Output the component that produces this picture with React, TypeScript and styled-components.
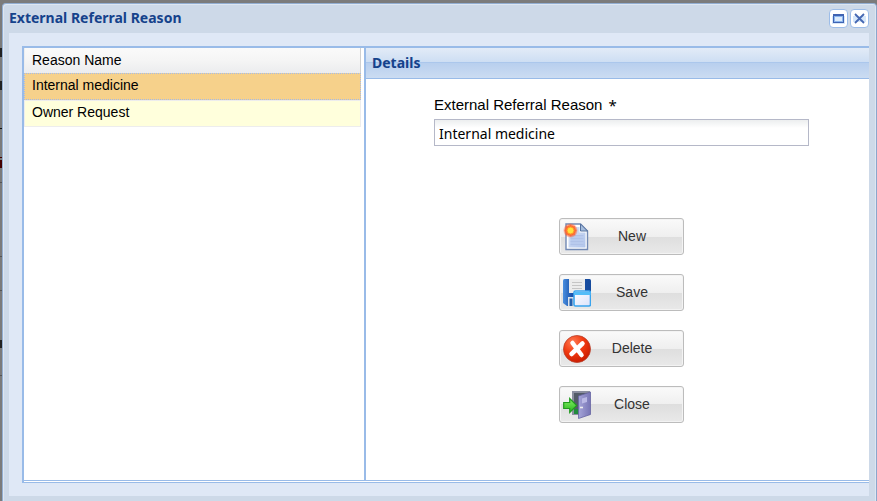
import React, { useState } from "react";
import styled, { createGlobalStyle } from "styled-components";

const arial = `"Liberation Sans", Arial, sans-serif`;
const humanist = `"Noto Sans", Tahoma, sans-serif`;
const line = "#99bbe8";

const GlobalStyle = createGlobalStyle`
  * { box-sizing: border-box; }
  body { margin: 0; background: #7b7b7b; font-family: ${arial}; font-size: 14px; color: #000; }
  button, input { font: inherit; color: inherit; }
`;

const Backdrop = styled.div`
  min-height: 100vh;
  display: flex;
  padding: 3px 0 0 2px;
  background:
    linear-gradient(#222, #222) 0 48px / 2px 9px no-repeat,
    linear-gradient(#222, #222) 0 81px / 2px 9px no-repeat,
    linear-gradient(#111, #111) 0 128px / 2px 1px no-repeat,
    linear-gradient(#400, #400) 0 157px / 2px 1px no-repeat,
    linear-gradient(#400, #400) 0 160px / 2px 8px no-repeat,
    linear-gradient(#555, #555) 0 182px / 2px 1px no-repeat,
    linear-gradient(#555, #555) 0 256px / 2px 1px no-repeat,
    linear-gradient(#555, #555) 0 290px / 2px 1px no-repeat,
    linear-gradient(#222, #222) 0 340px / 2px 8px no-repeat,
    linear-gradient(#555, #555) 0 375px / 2px 1px no-repeat,
    #7b7b7b;
`;

const Window = styled.section`
  flex: 1;
  min-width: 0;
  display: flex;
  flex-direction: column;
  padding: 0 7px 5px 6px;
  background: #cdd9e8;
  border: 1px solid #92aed2;
  border-right-color: #8ba6cb;
  border-bottom: 0;
  border-radius: 4px 4px 0 0;
  box-shadow: inset 1px 1px 0 #dde6f1, inset -1px 0 0 #dde6f1;
`;

const TitleBar = styled.header`
  height: 29px;
  flex: none;
  display: flex;
  align-items: center;
  justify-content: space-between;
`;

const Heading = styled.h1`
  margin: 0;
  padding-bottom: 2px;
  font: bold 14px/18px ${humanist};
  color: #15428b;
`;

const Tools = styled.div`
  display: flex;
  gap: 2px;
`;

const ToolButton = styled.button`
  width: 19px;
  height: 19px;
  padding: 0;
  border: 1px solid #9dbde8;
  border-radius: 4px;
  background: #fff;
  display: grid;
  place-items: center;
`;

const Body = styled.div`
  flex: 1;
  display: flex;
  padding: 13px 0 13px 13px;
  background: #dfe8f6;
`;

const Panels = styled.div`
  flex: 1;
  min-width: 0;
  display: flex;
  background: #fff;
  border-style: solid;
  border-color: ${line};
  border-width: 2px 0 1px 2px;
  padding-bottom: 1px;
`;

const ListPanel = styled.div`
  flex: 0 0 340px;
  padding-right: 3px;
  border-bottom: 1px solid ${line};
`;

const Grid = styled.table`
  width: 100%;
  border-collapse: separate;
  border-spacing: 0;
`;

const HeaderCell = styled.th`
  height: 25px;
  padding: 0 7px 1px;
  text-align: left;
  font-weight: normal;
  line-height: 16px;
  background: linear-gradient(#fafafa, #f5f5f5 50%, #ebecee);
  border-left: 1px solid #eee;
  border-right: 1px solid #d0d0d0;
`;

const Cell = styled.td<{ $selected: boolean }>`
  height: 27px;
  padding: 0 7px 4px;
  line-height: 16px;
  cursor: default;
  background: ${(p) => (p.$selected ? "#f6d18b" : "#ffffdc")};
  border: 1px ${(p) => (p.$selected ? "dotted #a3bae9" : "solid #ededed")};
`;

const DetailPanel = styled.div`
  flex: 1;
  min-width: 0;
  border-left: 2px solid ${line};
  border-bottom: 1px solid ${line};
`;

const PanelHeader = styled.h2`
  margin: 0;
  height: 31px;
  padding: 0 6px;
  font: bold 14px/30px ${humanist};
  color: #15428b;
  border-bottom: 1px solid ${line};
  background: linear-gradient(#e2ebf7, #cddef3 14px, #abc7ec 14px, #abc7ec 15px, #b8cfee 15px, #cbdcf2);
`;

const Form = styled.form`
  padding: 17px 60px 0 68px;
`;

const FieldLabel = styled.label`
  display: flex;
  gap: 6px;
  font-size: 15px;
  line-height: 18px;
  margin-bottom: 5px;
`;

const Required = styled.span`
  font-family: ${humanist};
`;

const TextField = styled.input`
  display: block;
  width: 100%;
  height: 27px;
  padding: 1px 4px 0;
  border: 1px solid #b5b8c8;
  border-radius: 0;
  outline: 0;
  font: 14px ${humanist};
  background: linear-gradient(#eceeef, #fff 8px);
`;

const Actions = styled.div`
  display: flex;
  flex-direction: column;
  align-items: center;
  gap: 19px;
  margin-top: 72px;
`;

const ActionButton = styled.button`
  width: 125px;
  height: 37px;
  padding: 0 10px 0 3px;
  display: flex;
  align-items: center;
  border: 1px solid #bcbcbc;
  border-radius: 3px;
  color: #333;
  background: linear-gradient(#fafafa, #efefef 50%, #dedede 50%, #e9e9e9);
  box-shadow: inset 0 0 0 1px #f3f3f3;
  span { flex: 1; text-align: center; padding-bottom: 2px; }
`;

const NewIcon = () => (
  <svg width="28" height="28" viewBox="0 0 28 28" aria-hidden="true">
    <defs>
      <linearGradient id="page" x2="1" y2="1"><stop stopColor="#dbe5f8" /><stop offset="1" stopColor="#aec3ea" /></linearGradient>
      <radialGradient id="glow"><stop stopColor="#fff36a" /><stop offset=".3" stopColor="#ffd94a" /><stop offset=".6" stopColor="#ff6a2a" /><stop offset="1" stopColor="#ff5020" stopOpacity="0" /></radialGradient>
    </defs>
    <path d="M3 1h14.500l7 7v18.500H3z" fill="#fff" stroke="#7189b4" strokeWidth="1.400" />
    <path d="M5.500 4h11v5.500h6v15h-17z" fill="url(#page)" />
    <path d="M17.500 1v7h7z" fill="#a5bddd" stroke="#56729f" />
    <path d="M7.500 12.500h13v10h-13z" fill="#b9cbee" />
    <path d="M7.500 12.500h13M7.500 15.500h13M7.500 18.500h13M7.500 21.500h13" stroke="#b0c2e8" />
    <circle cx="7.500" cy="7.500" r="7.500" fill="url(#glow)" />
    <path d="M7.500 1.500v12M1.500 7.500h12M3.200 3.200l8.600 8.600M11.800 3.200l-8.600 8.600" stroke="#ff6038" strokeWidth="1.300" opacity=".7" />
    <circle cx="7.500" cy="7.500" r="3.500" fill="#ffe23e" stroke="#ff9228" />
  </svg>
);

const SaveIcon = () => (
  <svg width="28" height="28" viewBox="0 0 28 28" aria-hidden="true">
    <defs>
      <linearGradient id="disk" x2="1"><stop stopColor="#4a8fe0" /><stop offset=".3" stopColor="#1c55ad" /><stop offset="1" stopColor="#164a9c" /></linearGradient>
      <linearGradient id="pane" x2="1" y2="1"><stop stopColor="#fff" /><stop offset="1" stopColor="#dbe2fb" /></linearGradient>
    </defs>
    <path d="M1.500 0h25q1.500 0 1.500 1.500v24q0 1.500-1.500 1.500H4l-4-3V1.500Q0 0 1.500 0z" fill="url(#disk)" />
    <path d="M6 0h16v14H6z" fill="#ececec" />
    <path d="M9 3.500h10M9 6.500h10M9 9.500h10" stroke="#c5c5c5" />
    <path d="M5 18h8v9H5z" fill="#dce3eb" />
    <path d="M6.500 19.500h3V27h-3z" fill="#225fae" />
    <rect x="11" y="12" width="16.500" height="15" rx="1.500" fill="url(#pane)" stroke="#39a4ee" strokeWidth="1.600" />
    <path d="M11 13h16.500v3H11z" fill="#54bdf8" />
  </svg>
);

const DeleteIcon = () => (
  <svg width="28" height="28" viewBox="0 0 28 28" aria-hidden="true">
    <defs><radialGradient id="red" cx=".35" cy=".25" r=".8"><stop stopColor="#ff7c55" /><stop offset=".5" stopColor="#f13a10" /><stop offset="1" stopColor="#c81b00" /></radialGradient></defs>
    <circle cx="14" cy="14" r="13.500" fill="url(#red)" stroke="#b8402c" strokeWidth=".8" />
    <path d="M9.500 8l9 12M19.500 8.500L8.500 19" stroke="#fff" strokeWidth="4.500" strokeLinecap="round" />
  </svg>
);

const CloseIcon = () => (
  <svg width="28" height="28" viewBox="0 0 28 28" aria-hidden="true">
    <defs>
      <linearGradient id="door" x2="1"><stop stopColor="#a5a4d8" /><stop offset="1" stopColor="#7775b5" /></linearGradient>
      <linearGradient id="arrow" x2="0" y2="1"><stop stopColor="#88f067" /><stop offset="1" stopColor="#26b71b" /></linearGradient>
    </defs>
    <path d="M9 0h18v24H9z" fill="#8a8e9f" />
    <path d="M11 2h14v21H11z" fill="#535b68" />
    <path d="M11 18h5v5h-5z" fill="#218b3c" />
    <path d="M15.500 5L27.500 1v22.500l-12 4z" fill="url(#door)" stroke="#6765a2" strokeWidth=".8" />
    <path d="M19 7.500l5-1.500v5l-5 1.500z" fill="#bab9e5" />
    <path d="M17 16.500h3" stroke="#eee" strokeWidth="1.600" />
    <path d="M.7 11.500h6V7.500l7 7-7 7v-4h-6z" fill="url(#arrow)" stroke="#229b20" strokeWidth="1.200" />
  </svg>
);

const MaximizeIcon = () => (
  <svg width="13" height="13" viewBox="0 0 13 13" aria-hidden="true">
    <path d="M0 4h13v8H0z" fill="#d6e7fa" />
    <path d="M1 2h11v9H1z" fill="#3f63b2" />
    <path d="M2 4h9v6H2z" fill="#8ab5ee" />
    <path d="M3 5h7v4H3z" fill="#dcebfb" />
  </svg>
);

const CrossIcon = () => (
  <svg width="13" height="13" viewBox="0 0 13 13" aria-hidden="true">
    <path d="M0 4h13v6H0z" fill="#d6e7fa" />
    <path d="M2 2l9 9M11 2l-9 9" stroke="#4668b2" strokeWidth="1.800" />
  </svg>
);

const reasons = ["Internal medicine", "Owner Request"];
const actions = [
  { label: "New", Icon: NewIcon },
  { label: "Save", Icon: SaveIcon },
  { label: "Delete", Icon: DeleteIcon },
  { label: "Close", Icon: CloseIcon },
];

export default function App() {
  const [selected, setSelected] = useState(0);
  const [value, setValue] = useState(reasons[0]);

  const choose = (index: number) => {
    setSelected(index);
    setValue(reasons[index]);
  };

  return (
    <Backdrop>
      <GlobalStyle />
      <Window>
        <TitleBar>
          <Heading>External Referral Reason</Heading>
          <Tools>
            <ToolButton type="button" aria-label="Maximize"><MaximizeIcon /></ToolButton>
            <ToolButton type="button" aria-label="Close window"><CrossIcon /></ToolButton>
          </Tools>
        </TitleBar>
        <Body>
          <Panels>
            <ListPanel>
              <Grid>
                <thead><tr><HeaderCell scope="col">Reason Name</HeaderCell></tr></thead>
                <tbody>
                  {reasons.map((reason, i) => (
                    <tr key={reason} onClick={() => choose(i)}>
                      <Cell $selected={i === selected}>{reason}</Cell>
                    </tr>
                  ))}
                </tbody>
              </Grid>
            </ListPanel>
            <DetailPanel>
              <PanelHeader>Details</PanelHeader>
              <Form onSubmit={(e) => e.preventDefault()}>
                <FieldLabel htmlFor="reason">External Referral Reason <Required>*</Required></FieldLabel>
                <TextField id="reason" type="text" required value={value} onChange={(e) => setValue(e.target.value)} />
                <Actions>
                  {actions.map(({ label, Icon }) => (
                    <ActionButton key={label} type="button"><Icon /><span>{label}</span></ActionButton>
                  ))}
                </Actions>
              </Form>
            </DetailPanel>
          </Panels>
        </Body>
      </Window>
    </Backdrop>
  );
}
